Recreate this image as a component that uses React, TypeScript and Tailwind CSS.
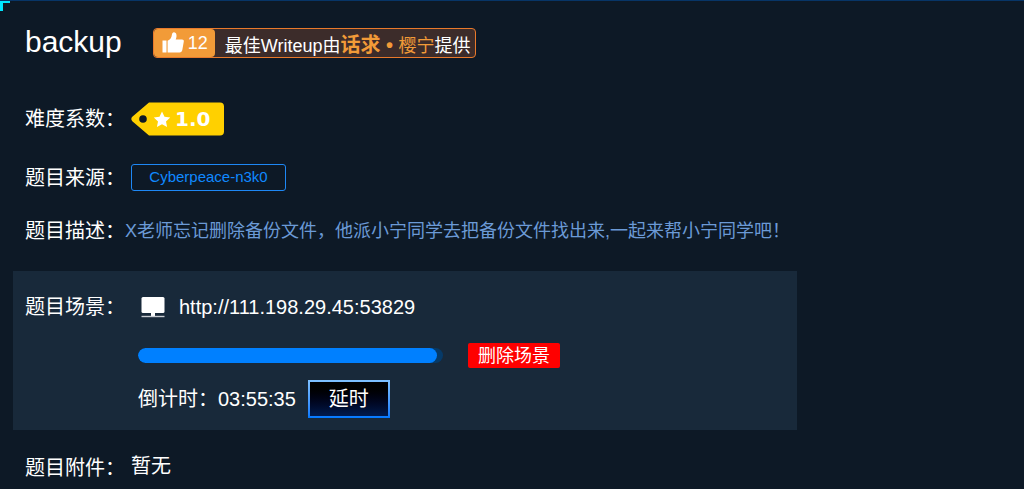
import type { ReactNode } from "react";

function ThumbIcon() {
  return (
    <svg className="h-[22px] w-[22px] shrink-0" viewBox="0 0 22 22" fill="#fff" aria-hidden="true">
      <path d="M0.5 8.500h4v12H0.500z" />
      <path d="M5.600 8.800c2.600-1 4-3.200 4.300-6 .2-1.700 1-2.600 2.200-2.500 1.800.2 2.700 2 2.400 4.300-.1 1.200-.4 2.100-.8 2.900h6.300c1.400 0 2 .9 1.800 2l-1.500 8.500c-.3 1.600-1.200 2.500-2.700 2.500h-12z" />
    </svg>
  );
}

function MonitorIcon() {
  return (
    <svg className="h-[22px] w-6 shrink-0" viewBox="0 0 24 22" aria-hidden="true">
      <rect x="0.500" y="1" width="23" height="16" rx="1.500" fill="#fff" />
      <path d="M10 17h4v3h-4z" fill="#fff" />
      <path d="M0.500 19.800h23v1.400h-23z" fill="#c9cdd2" />
    </svg>
  );
}

function DifficultyTag({ score }: { score: string }) {
  return (
    <div className="relative h-[34px] w-[94px]">
      <svg className="h-full w-full" viewBox="0 0 94 34" aria-hidden="true">
        <path
          d="M18 .6h71a4 4 0 0 1 4 4v24.800a4 4 0 0 1-4 4H18L1.300 19.200q-2-2.200 0-4.400z"
          fill="#ffd000"
        />
        <circle cx="12" cy="17" r="3.800" fill="#0d1926" />
        <path
          d="M31 9.500l2.500 5.300 5.700.7-4.200 3.900 1.100 5.700-5.100-2.800-5.100 2.800 1.100-5.700-4.200-3.900 5.700-.7z"
          fill="#fff"
        />
      </svg>
      <span className="absolute inset-y-0 left-[44px] flex items-center font-['DejaVu_Sans',sans-serif] text-[20px] font-bold leading-none text-white">
        {score}
      </span>
    </div>
  );
}

function Label({ children }: { children: ReactNode }) {
  return <span className="w-[100px] shrink-0 text-[20px] leading-6">{children}</span>;
}

export default function App() {
  return (
    <main className="relative min-h-screen border-t border-[#073567] bg-[#0d1926] px-[13px] pb-2 pt-[27px] font-['Liberation_Sans','Noto_Sans_CJK_SC',sans-serif] text-white">
      <span className="absolute left-0 top-0 h-[10px] w-[10px] border-l-[3px] border-t-2 border-[#00e5ff]" />

      <header className="flex h-[30px] items-center gap-[31px] pl-3">
        <h1 className="pb-[2px] text-[30px] leading-[30px]">backup</h1>
        <div className="flex h-[30px] items-center whitespace-nowrap rounded-[4px] border border-[#e8792b] bg-[#3c2c2a] pr-1 text-[18px]">
          <button
            type="button"
            className="flex h-7 items-center gap-1 rounded-[4px] bg-[#f29b38] pl-2 pr-[7px] leading-none"
          >
            <ThumbIcon />
            12
          </button>
          <p className="pl-[10px] pt-[5px] leading-[22px]">
            最佳Writeup由
            <a href="#writeup" className="text-[#f29b38]">
              <b className="text-[20px]">话求 • </b>樱宁
            </a>
            提供
          </p>
        </div>
      </header>

      <section className="mt-11 flex items-center gap-[6px] pl-3">
        <Label>难度系数：</Label>
        <DifficultyTag score="1.0" />
      </section>

      <section className="mt-7 flex items-center gap-[6px] pl-3">
        <Label>题目来源：</Label>
        <a
          href="#source"
          className="flex h-[27px] w-[155px] items-center justify-center rounded-[3px] border border-[#1e88f5] text-[15px] text-[#1089ff]"
        >
          Cyberpeace-n3k0
        </a>
      </section>

      <section className="mt-7 flex items-center pl-3">
        <Label>题目描述：</Label>
        <p className="text-[18px] leading-6 text-[#6b9ad6]">
          X老师忘记删除备份文件，他派小宁同学去把备份文件找出来,一起来帮小宁同学吧！
        </p>
      </section>

      <section className="mt-7 flex max-w-[784px] items-start bg-[#18293a] pb-3 pl-3 pt-6">
        <Label>题目场景：</Label>
        <div className="flex flex-1 flex-col pl-[13px]">
          <div className="flex h-6 items-center gap-[14px] pl-[3px]">
            <MonitorIcon />
            <a href="http://111.198.29.45:53829" className="text-[20px] leading-6">
              http://111.198.29.45:53829
            </a>
          </div>
          <div className="mt-6 flex items-center gap-[25px]">
            <div
              role="progressbar"
              aria-label="倒计时"
              aria-valuenow={98}
              className="h-[15px] w-[305px] overflow-hidden rounded-full bg-[#063a68]"
            >
              <div className="h-full rounded-full bg-[#0080ff]" style={{ width: "98%" }} />
            </div>
            <button
              type="button"
              className="flex h-[25px] items-center rounded-[2px] bg-[#ff0000] px-[10px] text-[18px] leading-none"
            >
              删除场景
            </button>
          </div>
          <div className="mt-3 flex items-center gap-3 text-[20px] leading-6">
            <span>倒计时：03:55:35</span>
            <button
              type="button"
              className="h-[38px] w-[82px] bg-linear-to-b from-[#7fc1ff] to-[#0078ff] p-[2px] leading-none"
            >
              <span className="flex h-full items-center justify-center bg-linear-to-b from-black to-[#001a4d]">
                延时
              </span>
            </button>
          </div>
        </div>
      </section>

      <section className="mt-6 flex items-end gap-[6px] pl-3">
        <Label>题目附件：</Label>
        <span className="pb-[2px] text-[20px] leading-6">暂无</span>
      </section>
    </main>
  );
}
